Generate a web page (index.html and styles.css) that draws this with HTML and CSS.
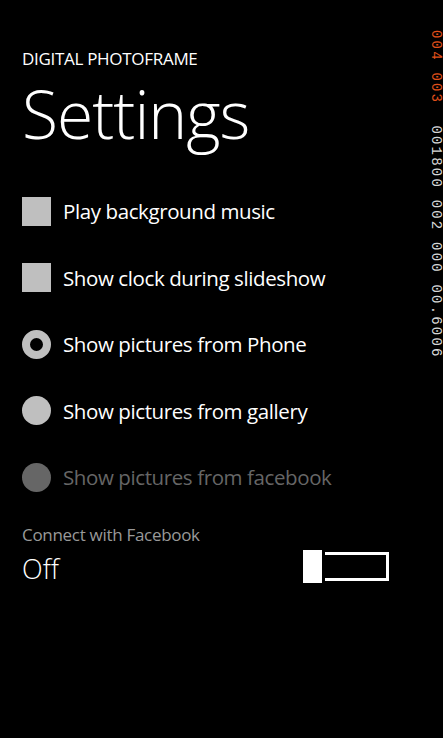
FILE: index.html
```html
<!DOCTYPE html>
<html lang="en">
<head>
    <meta charset="UTF-8">
    <meta name="viewport" content="width=device-width, initial-scale=1.0">
    <title>Settings</title>
    <link rel="stylesheet" href="styles.css">
</head>
<body>

<div class="page">
    <div class="app-title">DIGITAL PHOTOFRAME</div>
    <h1 class="page-title">Settings</h1>

    <!-- Options -->
    <div class="options">
        <div class="option">
            <span class="check"></span>
            <span class="label">Play background music</span>
        </div>
        <div class="option">
            <span class="check"></span>
            <span class="label">Show clock during slideshow</span>
        </div>
        <div class="option">
            <span class="radio selected"></span>
            <span class="label">Show pictures from Phone</span>
        </div>
        <div class="option">
            <span class="radio"></span>
            <span class="label">Show pictures from gallery</span>
        </div>
        <div class="option disabled">
            <span class="radio"></span>
            <span class="label">Show pictures from facebook</span>
        </div>
    </div>

    <!-- Facebook toggle -->
    <div class="toggle-block">
        <div class="toggle-header">Connect with Facebook</div>
        <div class="toggle-row">
            <span class="toggle-value">Off</span>
            <span class="toggle">
                <span class="toggle-thumb"></span>
                <span class="toggle-track"></span>
            </span>
        </div>
    </div>
</div>

<!-- frame rate counters -->
<div class="counters"><span class="hot">004 003</span>  001800 002 000 00.6006</div>

</body>
</html>
```

FILE: styles.css
```css
body {
    margin: 0;
    background-color: #000;
    color: #fff;
    font-family: "Open Sans", "Noto Sans", sans-serif;
}
.page {
    padding: 49px 0 0 22px;
    width: 400px;
}
.app-title {
    font-size: 17px;
    line-height: 20px;
    letter-spacing: -0.3px;
}
.page-title {
    margin: 0;
    padding-top: 6px;
    font-size: 66px;
    font-weight: 300;
    line-height: 76px;
    letter-spacing: -1px;
}
.options {
    padding-top: 27px;
}
.option {
    display: flex;
    align-items: center;
    gap: 12px;
    height: 66.5px;
}
.label {
    font-size: 20.5px;
    letter-spacing: -0.4px;
}
.check {
    width: 29px;
    height: 29px;
    background-color: #bfbfbf;
}
.radio {
    width: 29px;
    height: 29px;
    border-radius: 50%;
    background-color: #bfbfbf;
    box-sizing: border-box;
}
.radio.selected {
    background-color: #000;
    border: 8.5px solid #bfbfbf;
}
.option.disabled .label {
    color: #666;
}
.option.disabled .radio {
    background-color: #666;
}
.toggle-block {
    padding-top: 12px;
}
.toggle-header {
    color: #999;
    font-size: 17px;
    line-height: 24px;
    letter-spacing: -0.3px;
}
.toggle-row {
    display: flex;
    align-items: center;
    justify-content: space-between;
    padding-right: 33px;
}
.toggle-value {
    font-size: 27px;
    font-weight: 300;
    padding-top: 3px;
}
.toggle {
    display: flex;
    align-items: center;
    gap: 3px;
}
.toggle-thumb {
    width: 19px;
    height: 33px;
    background-color: #fff;
}
.toggle-track {
    width: 64px;
    height: 29px;
    box-sizing: border-box;
    border: 3px solid #fff;
    border-left: none;
}
.counters {
    position: absolute;
    top: 30px;
    left: 428px;
    writing-mode: vertical-rl;
    font-family: "Liberation Mono", monospace;
    font-size: 14px;
    letter-spacing: 2.2px;
    color: #d8d8d8;
    white-space: pre;
}
.counters .hot {
    color: #e0501a;
}
```
